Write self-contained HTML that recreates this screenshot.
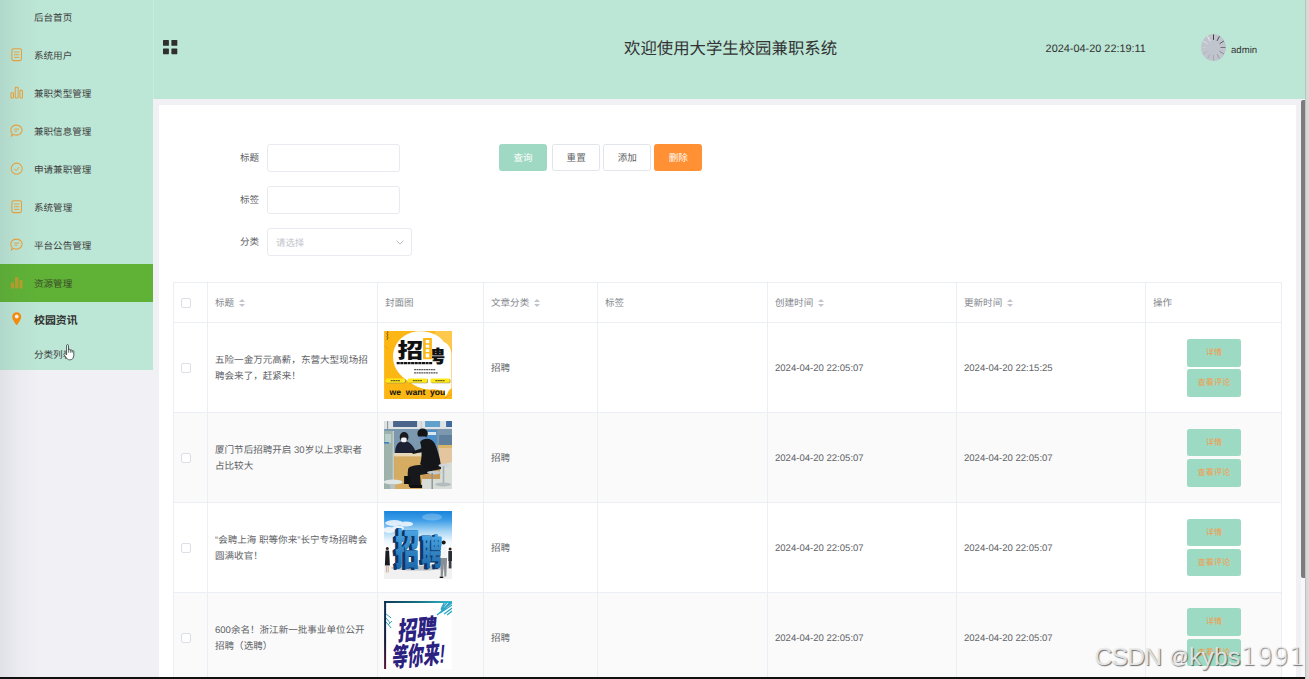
<!DOCTYPE html>
<html lang="zh-CN">
<head>
<meta charset="utf-8">
<title>大学生校园兼职系统</title>
<style>
*{box-sizing:border-box;margin:0;padding:0}
html,body{width:1309px;height:679px;overflow:hidden}
body{position:relative;background:#f0f0f5;font-family:"Liberation Sans","Noto Sans CJK SC",sans-serif;font-size:9.56px;color:#636569;-webkit-text-size-adjust:none;text-rendering:geometricPrecision}
.abs{position:absolute}
/* sidebar */
#side{position:absolute;left:0;top:0;width:153px;height:370px;background:#bce6d6}
#sideshade{position:absolute;left:0;top:0;width:40px;height:677px;background:linear-gradient(90deg,rgba(60,70,80,.085),rgba(60,70,80,.03) 45%,rgba(60,70,80,0));pointer-events:none}
.mi{position:absolute;left:0;width:153px;height:38px;line-height:41px;color:#3d3d3d;font-size:9.56px;padding-left:34px;white-space:nowrap}
.mi svg{position:absolute;left:10.3px;top:12.2px;width:13.4px;height:13.4px}
.mi.act{background:#5fb236}
.mi.sub{font-weight:bold;font-size:10.9px;color:#303030;line-height:42.6px}
.mi.act{color:#3b4a2c}
/* header */
#head{position:absolute;left:153px;top:0;width:1152px;height:99px;background:#bce6d6}
#seam{position:absolute;left:153px;top:0;width:1px;height:99px;background:#c9ebde}
#title{position:absolute;left:624px;top:37.3px;width:213px;height:24px;line-height:24px;font-size:16.4px;color:#333;white-space:nowrap;text-align:center}
#clock{position:absolute;left:1045.6px;top:42px;font-size:10.9px;line-height:14px;color:#333;white-space:nowrap}
#user{position:absolute;left:1231px;top:45.4px;font-size:9.6px;line-height:12px;color:#333}
/* scrollbar */
#sbtrack{position:absolute;left:1305px;top:0;width:4px;height:679px;background:linear-gradient(90deg,#b4b4b4 0,#d6d6d6 1.3px,#dbdbdb 100%)}
#sbbg{position:absolute;left:1301px;top:99px;width:4px;height:578px;background:#f7f7f9}
#sbthumb{position:absolute;left:1301px;top:100px;width:4px;height:478px;background:#7d7d7d;border-radius:2px 0 0 2px}
#bottombar{position:absolute;left:0;top:677px;width:1305px;height:2px;background:#111}
/* card */
#card{position:absolute;left:159px;top:105px;width:1136.5px;height:572px;background:#fff}
.lbl{position:absolute;width:60px;text-align:right;line-height:30px;height:27.5px;color:#606266;font-size:9.56px}
.inp{position:absolute;height:27.5px;border:1px solid #e8eaef;border-radius:3px;background:#fff}
.btn{position:absolute;top:144.2px;width:47.5px;height:27.2px;line-height:28px;text-align:center;border-radius:2.5px;font-size:9.56px;border:1px solid #e1e4ea;background:#fff;color:#606266}
.ph{position:absolute;left:8px;top:0;line-height:28px;color:#c0c4cc;font-size:9.4px}
.arr{position:absolute;right:7px;top:11px}
.th{position:absolute;left:6.3px;top:8.3px;width:68.2px;height:68px}
/* table */
#tbl{position:absolute;left:173px;top:282px;width:1109px;height:395px;border-left:1px solid #ebeef5;border-top:1px solid #ebeef5;overflow:hidden}
.row{position:absolute;left:0;width:1108px;border-bottom:1px solid #ebeef5;background:#fff}
.row.alt{background:#fafafa}
.c{position:absolute;top:0;height:100%;border-right:1px solid #ebeef5;padding-left:7px;display:flex;align-items:center;line-height:15.9px;color:#606266;padding-top:3.8px}
.hd .c{color:#85888e;padding-top:2.6px}
.cb{position:absolute;left:7.4px;top:50%;margin-top:-5px;width:10px;height:10px;border:1px solid #dcdfe6;border-radius:2px;background:#fff}
.ab{position:absolute;left:40.8px;width:54.4px;height:27.5px;line-height:28.5px;text-align:center;background:#9ddac3;color:#f39b4a;border-radius:2.5px;font-size:8.2px}
.sort{display:inline-block;position:relative;width:8px;height:12px;margin-left:4px}
.sort:before,.sort:after{content:"";position:absolute;left:1px;border:3px solid transparent}
.sort:before{top:-2px;border-bottom-color:#c0c4cc}
.sort:after{top:6px;border-top-color:#c0c4cc}
#wm{position:absolute;left:1094.6px;top:641px;font-size:24.6px;line-height:32px;color:rgba(235,235,235,.92);text-shadow:1px 1px 1px rgba(0,0,0,.55);white-space:nowrap;font-family:"Liberation Sans",sans-serif}
</style>
</head>
<body>
<div id="side">
<div class="mi" style="top:-2px">后台首页</div>
<div class="mi" style="top:36px"><svg viewBox="0 0 14 14" fill="none" stroke="#eda23c" stroke-width="1.1"><rect x="2" y="0.8" width="10" height="12.4" rx="1.6"/><path d="M4.3 4.2h5.4M4.3 7h5.4M4.3 9.8h5.4" stroke-width="1"/></svg>系统用户</div>
<div class="mi" style="top:74px"><svg viewBox="0 0 14 14" fill="none" stroke="#eda23c" stroke-width="1.1"><rect x="1" y="7" width="2.6" height="5.6" rx=".8"/><rect x="5.5" y="1.4" width="3" height="11.2" rx=".8"/><rect x="10.4" y="4.6" width="2.6" height="8" rx=".8"/></svg>兼职类型管理</div>
<div class="mi" style="top:112px"><svg viewBox="0 0 14 14" fill="none" stroke="#eda23c" stroke-width="1.1"><path d="M7 1.2a5.6 5.2 0 1 1-3 9.6L1.6 12.6l.6-2.9A5.6 5.2 0 0 1 7 1.2z"/><path d="M4.6 5.4h5M4.6 7.6h3" stroke-width="1"/></svg>兼职信息管理</div>
<div class="mi" style="top:150px"><svg viewBox="0 0 14 14" fill="none" stroke="#eda23c" stroke-width="1.1"><circle cx="7" cy="7" r="5.8"/><path d="M4.4 7.2l1.9 1.9 3.4-3.8" stroke-width="1"/></svg>申请兼职管理</div>
<div class="mi" style="top:188px"><svg viewBox="0 0 14 14" fill="none" stroke="#eda23c" stroke-width="1.1"><rect x="2" y="0.8" width="10" height="12.4" rx="1.6"/><path d="M4.3 4.2h5.4M4.3 7h5.4M4.3 9.8h5.4" stroke-width="1"/></svg>系统管理</div>
<div class="mi" style="top:226px"><svg viewBox="0 0 14 14" fill="none" stroke="#eda23c" stroke-width="1.1"><path d="M7 1.2a5.6 5.2 0 1 1-3 9.6L1.6 12.6l.6-2.9A5.6 5.2 0 0 1 7 1.2z"/><path d="M4.6 5.4h5M4.6 7.6h3" stroke-width="1"/></svg>平台公告管理</div>
<div class="mi act" style="top:264px"><svg viewBox="0 0 14 14" fill="#b59f2c" stroke="none"><rect x="0.8" y="6.6" width="3.4" height="6.4" rx=".8"/><rect x="5.2" y="1" width="3.6" height="12" rx=".8"/><rect x="9.8" y="4.2" width="3.4" height="8.8" rx=".8"/></svg>资源管理</div>
<div class="mi sub" style="top:300px"><svg viewBox="0 0 14 14" fill="#fb8c0a" stroke="none"><path d="M7 0.2a4.700 4.700 0 0 0-4.700 4.700c0 3.200 4.700 9 4.700 9s4.700-5.800 4.700-9A4.700 4.700 0 0 0 7 .2z"/><circle cx="7" cy="4.700" r="2" fill="#fff6ea"/></svg>校园资讯</div>
<div class="mi" style="top:334.7px">分类列表</div>
</div>
<div id="sideshade"></div>
<svg class="abs" style="left:62.8px;top:344.3px" width="13" height="17" viewBox="0 0 13 17"><path d="M3.6 1.6a.95.95 0 0 1 1.9 0v4.5a.9.9 0 0 1 1.8.1v.5a.9.9 0 0 1 1.8.2v.5a.85.85 0 0 1 1.7.3v3.5c0 2.6-1.4 4.6-3.6 4.6H6.4c-1.2 0-2-.5-2.8-1.6L1.1 10.8c-.6-.9.5-1.8 1.3-1.1l1.2 1.2z" fill="#fff" stroke="#3c4a48" stroke-width=".9" stroke-linejoin="round"/><path d="M5.500 6.200v2.500M7.300 6.600v2.200M9.100 7v1.900" stroke="#3c4a48" stroke-width=".7" fill="none"/></svg>
<div id="head"></div>
<div id="seam"></div>
<svg class="abs" style="left:163px;top:40px" width="15" height="15" viewBox="0 0 15 15" fill="#2f2f2f"><rect x="0" y="0" width="5.9" height="5.8" rx=".6"/><rect x="8.4" y="0" width="5.9" height="5.8" rx=".6"/><rect x="0" y="8.5" width="5.9" height="5.7" rx=".6"/><rect x="8.4" y="8.5" width="5.9" height="5.7" rx=".6"/></svg>
<div id="title">欢迎使用大学生校园兼职系统</div>
<div id="clock">2024-04-20 22:19:11</div>
<svg id="avatar" class="abs" style="left:1201px;top:34px" width="25" height="27" viewBox="0 0 25 27"><ellipse cx="12.5" cy="13.5" rx="12.5" ry="13.5" fill="#c0c4cc"/><g stroke-width="1" stroke-linecap="round"><line x1="12.50" y1="5.50" x2="12.50" y2="0.90" stroke="#3a3d44"/><line x1="16.20" y1="6.57" x2="18.30" y2="2.59" stroke="#4a4d55"/><line x1="18.91" y1="9.50" x2="22.55" y2="7.20" stroke="#5a5d65"/><line x1="19.90" y1="13.50" x2="24.10" y2="13.50" stroke="#70737b"/><line x1="18.91" y1="17.50" x2="22.55" y2="19.80" stroke="#868991"/><line x1="16.20" y1="20.43" x2="18.30" y2="24.41" stroke="#9a9da5"/><line x1="12.50" y1="21.50" x2="12.50" y2="26.10" stroke="#a6a9b1"/><line x1="8.80" y1="20.43" x2="6.70" y2="24.41" stroke="#adb0b8"/><line x1="6.09" y1="17.50" x2="2.45" y2="19.80" stroke="#b2b5bd"/><line x1="5.10" y1="13.50" x2="0.90" y2="13.50" stroke="#c8ccd4"/><line x1="6.09" y1="9.50" x2="2.45" y2="7.20" stroke="#dfe2e8"/><line x1="8.80" y1="6.57" x2="6.70" y2="2.59" stroke="#eceef2"/></g></svg>
<div id="user">admin</div>
<div id="sbbg"></div><div id="sbtrack"></div><div id="sbthumb"></div><div id="bottombar"></div>
<div id="card"></div>
<div class="lbl" style="left:199px;top:144px">标题</div><div class="inp" style="left:267px;top:144px;width:133px"></div>
<div class="lbl" style="left:199px;top:186px">标签</div><div class="inp" style="left:267px;top:186px;width:133px"></div>
<div class="lbl" style="left:199px;top:228.4px">分类</div><div class="inp" style="left:267px;top:228.4px;width:145px"><span class="ph">请选择</span><svg class="arr" viewBox="0 0 8 5" width="8" height="5"><path d="M.5.6L4 4.100 7.500.6" fill="none" stroke="#b3b7bf" stroke-width="1"/></svg></div>
<div class="btn" style="left:499.2px;width:47.8px;background:#9fd9c3;border-color:#9fd9c3;color:#fff">查询</div>
<div class="btn" style="left:552.4px">重置</div>
<div class="btn" style="left:603.3px;width:47.8px">添加</div>
<div class="btn" style="left:654.3px;width:47.8px;background:#ff9033;border-color:#ff9033;color:#fff">删除</div>
<div id="tbl">
<div class="row hd" style="top:0px;height:40px"><div class="c" style="left:0px;width:34px"><span class="cb"></span></div><div class="c" style="left:34px;width:170px">标题<i class="sort"></i></div><div class="c" style="left:204px;width:106px">封面图</div><div class="c" style="left:310px;width:114px">文章分类<i class="sort"></i></div><div class="c" style="left:424px;width:170px">标签</div><div class="c" style="left:594px;width:189px">创建时间<i class="sort"></i></div><div class="c" style="left:783px;width:189px">更新时间<i class="sort"></i></div><div class="c" style="left:972px;width:136px">操作</div></div>
<div class="row " style="top:40px;height:90px"><div class="c" style="left:0px;width:34px"><span class="cb"></span></div><div class="c" style="left:34px;width:170px"><div>五险一金万元高薪，东营大型现场招<br>聘会来了，赶紧来！</div></div><div class="c" style="left:204px;width:106px"><svg class="th" viewBox="0 0 68 68" width="68" height="68"><defs><clipPath id="rh"><rect x="48" y="10" width="20" height="26"/></clipPath></defs><rect width="68" height="68" fill="#fdb714"/><circle cx="61" cy="7" r="11.5" fill="#fdc84c"/><path d="M36 .2c11 0 19 4 24 11 4 1 7.400 6 7.400 12v34c-1 1-3 2-4 5-.4 1.600-1.400 2.600-2.400 3.200.6-3-1-6-5-6.400-8-.6-17 .6-26-5C18 47 9 39 9 26 9 11 21 .2 36 .2z" fill="#fff"/><path d="M60 11c4 1 7.400 6 7.400 12V0H49c5 2 9 6 11 11z" fill="#fdc84c" opacity=".55"/><path d="M3.400 .4c1.800 1-1.800 1.800 0 2.800s-1.800 1.800 0 2.800-1.800 1.800 0 2.800" stroke="#222" stroke-width=".7" fill="none"/><path d="M.2 15.300l4 2.300" stroke="#f39a1e" stroke-width=".8"/><path d="M60 67.400l8-4.400" stroke="#f39a1e" stroke-width=".8"/>
<text x="13.400" y="27.400" font-family="'Liberation Sans','Noto Sans CJK SC',sans-serif" font-weight="900" font-size="21" fill="#111" textLength="25.600" lengthAdjust="spacingAndGlyphs">招</text>
<rect x="39" y="7" width="8.800" height="21.200" fill="#fdb714"/><rect x="41.600" y="9" width="3.600" height="17.400" fill="#fff"/><path d="M41 13h5M41 17.400h5M41 21.800h5" stroke="#fdb714" stroke-width="1.500"/>
<text x="37.600" y="32" font-family="'Liberation Sans','Noto Sans CJK SC',sans-serif" font-weight="900" font-size="18" fill="#111" textLength="23.200" lengthAdjust="spacingAndGlyphs" clip-path="url(#rh)">聘</text>
<path d="M12.600 32.200h35.800" stroke="#151515" stroke-width="2.200" stroke-dasharray="3.100 .5"/><path d="M30 38.600h21.600M30 41.900h24" stroke="#555" stroke-width="1.300" stroke-dasharray="1.900 .5"/>
<g fill="#8d8466"><rect x="2.200" y="48.100" width="19.400" height="4.200" rx="1.200"/><rect x="24.300" y="48.100" width="19.600" height="4.200" rx="1.200"/><rect x="47" y="48.100" width="19.300" height="4.200" rx="1.200"/></g><g fill="#ffe81a"><rect x="1.600" y="47.500" width="19.400" height="4.200" rx="1.200"/><rect x="23.700" y="47.500" width="19.600" height="4.200" rx="1.200"/><rect x="46.400" y="47.500" width="19.300" height="4.200" rx="1.200"/></g>
<path d="M6.600 49.600h9.600M28.700 49.600h9.600M51.300 49.600h9.600" stroke="#6b6420" stroke-width="1.200" stroke-dasharray="2 .4"/>
<text x="5.500" y="63.800" font-family="'Liberation Sans',sans-serif" font-weight="bold" font-size="8.600" fill="#111" word-spacing="2.300">we want you</text></svg></div><div class="c" style="left:310px;width:114px">招聘</div><div class="c" style="left:424px;width:170px"></div><div class="c" style="left:594px;width:189px">2024-04-20 22:05:07</div><div class="c" style="left:783px;width:189px">2024-04-20 22:15:25</div><div class="c" style="left:972px;width:136px"><div class="ab" style="top:16px">详情</div><div class="ab" style="top:46.3px">查看评论</div></div></div>
<div class="row alt" style="top:130px;height:90px"><div class="c" style="left:0px;width:34px"><span class="cb"></span></div><div class="c" style="left:34px;width:170px"><div>厦门节后招聘开启 30岁以上求职者<br>占比较大</div></div><div class="c" style="left:204px;width:106px"><svg class="th" viewBox="0 0 68 68" width="68" height="68"><rect width="68" height="68" fill="#7b98ae"/><rect width="68" height="8" fill="#dfe3e6"/><rect x="9" y="0" width="24" height="6" fill="#4a648c"/><rect x="41" y="0" width="15" height="6" fill="#5fa0cc"/><rect x="62" y="0" width="6" height="6" fill="#3f6aa0"/><rect x="3" y="0" width="1" height="8" fill="#8a8f95"/><rect x="36.5" y="0" width="1.2" height="8" fill="#c8ccd0"/><rect x="55" y="14" width="13" height="11" fill="#5f7f9c"/><rect x="42" y="9" width="11" height="14" fill="#4f8fc8"/><rect x="43" y="11" width="9" height="3" fill="#d8e6f0"/>
<rect x="0" y="10" width="9.5" height="58" fill="#9fb3ac"/><rect x="1" y="13" width="6" height="9" fill="#b9d0cc"/><rect x="0" y="21" width="5" height="1.6" fill="#3f7fbf"/><rect x="8.6" y="10" width="1.2" height="58" fill="#c9d2d0"/>
<rect x="30" y="40" width="38" height="28" fill="#d9ddd8"/><path d="M54 25h14v16l-12 3z" fill="#e3c5a0"/><rect x="54" y="24" width="14" height="3" fill="#d8b56a"/><rect x="10" y="33" width="28" height="35" fill="#d6ab62"/><rect x="10" y="32" width="30" height="3.4" fill="#e8d8b8"/><rect x="38" y="44" width="18" height="14" fill="#c99a58"/>
<path d="M11 32c0-8 3-12 9-12s10 6 12 12z" fill="#1c2233"/><ellipse cx="20" cy="16" rx="4.4" ry="5" fill="#1b1a1e"/><rect x="17" y="16.4" width="5.6" height="4.8" rx="1.6" fill="#f4f4f6"/>
<ellipse cx="38.5" cy="12.5" rx="5.2" ry="5" fill="#141417"/><path d="M34.6 15.4h7v5.4h-5z" fill="#6b8fc0"/><path d="M36 21c4-5 12-4 15 2 3 7 6 18 6 25l-14 3-7-8c2-6 2-16 0-22z" fill="#15161a"/><path d="M42 30l-13 3-2-2 14-5z" fill="#15161a"/><path d="M37 44c-6 0-12 1-13 4-1 6 0 13 1 18h12l-1-12 12-2z" fill="#17181c"/><path d="M20 55h6v8h-6z" fill="#111"/><path d="M26 64h12v3H26z" fill="#101012"/>
<ellipse cx="9" cy="61" rx="9.5" ry="2.6" fill="#dfe7e6"/><rect x="6" y="63" width="5" height="5" fill="#b9c4c2"/><ellipse cx="50" cy="51.6" rx="7" ry="1.8" fill="#c3cacd"/><rect x="47.4" y="52" width="1.4" height="16" fill="#8c9599"/><ellipse cx="60" cy="44.6" rx="5.6" ry="1.8" fill="#cfd5d8"/><rect x="58.6" y="45" width="1.6" height="17" fill="#a8b0b4"/><ellipse cx="59" cy="63.4" rx="8" ry="2" fill="#b4bcc0"/></svg></div><div class="c" style="left:310px;width:114px">招聘</div><div class="c" style="left:424px;width:170px"></div><div class="c" style="left:594px;width:189px">2024-04-20 22:05:07</div><div class="c" style="left:783px;width:189px">2024-04-20 22:05:07</div><div class="c" style="left:972px;width:136px"><div class="ab" style="top:15.8px">详情</div><div class="ab" style="top:46.1px">查看评论</div></div></div>
<div class="row " style="top:220px;height:90px"><div class="c" style="left:0px;width:34px"><span class="cb"></span></div><div class="c" style="left:34px;width:170px"><div>“会聘上海 职等你来”长宁专场招聘会<br>圆满收官！</div></div><div class="c" style="left:204px;width:106px"><svg class="th" viewBox="0 0 68 68" width="68" height="68"><defs><linearGradient id="sky" x1="0" y1="0" x2="0" y2="1"><stop offset="0" stop-color="#1a84dc"/><stop offset=".14" stop-color="#3f9fe8"/><stop offset=".3" stop-color="#a9d6f5"/><stop offset=".44" stop-color="#edf6fd"/><stop offset=".55" stop-color="#fff"/><stop offset="1" stop-color="#fff"/></linearGradient><linearGradient id="lf" x1="0" y1="0" x2="0" y2="1"><stop offset="0" stop-color="#4ea9e8"/><stop offset="1" stop-color="#175f9f"/></linearGradient></defs><rect width="68" height="68" fill="url(#sky)"/><rect y="55" width="68" height="13" fill="#f1f1f2"/><g fill="#fff" opacity=".8"><ellipse cx="10" cy="12" rx="9" ry="3"/><ellipse cx="22" cy="13" rx="7" ry="2.6"/><ellipse cx="5" cy="19" rx="6" ry="3"/><ellipse cx="14" cy="17" rx="6" ry="2.4"/><ellipse cx="48" cy="6" rx="10" ry="3.6" opacity=".3"/></g>
<ellipse cx="34" cy="57" rx="27" ry="2.6" fill="#8f99a4" opacity=".55"/>
<g font-family="'Liberation Sans','Noto Sans CJK SC',sans-serif" font-weight="900"><text x="8.00" y="54.60" font-size="43" textLength="24" lengthAdjust="spacingAndGlyphs" fill="#0a3768">招</text><text x="8.80" y="54.35" font-size="43" textLength="24" lengthAdjust="spacingAndGlyphs" fill="#0a3768">招</text><text x="9.60" y="54.10" font-size="43" textLength="24" lengthAdjust="spacingAndGlyphs" fill="#0a3768">招</text><text x="10.40" y="53.85" font-size="43" textLength="24" lengthAdjust="spacingAndGlyphs" fill="#0a3768">招</text><text x="11.2" y="53.6" font-size="43" textLength="24" lengthAdjust="spacingAndGlyphs" fill="url(#lf)">招</text><text x="34.20" y="55.00" font-size="36" textLength="21.4" lengthAdjust="spacingAndGlyphs" fill="#0a3768">聘</text><text x="35.00" y="54.75" font-size="36" textLength="21.4" lengthAdjust="spacingAndGlyphs" fill="#0a3768">聘</text><text x="35.80" y="54.50" font-size="36" textLength="21.4" lengthAdjust="spacingAndGlyphs" fill="#0a3768">聘</text><text x="36.60" y="54.25" font-size="36" textLength="21.4" lengthAdjust="spacingAndGlyphs" fill="#0a3768">聘</text><text x="37.4" y="54" font-size="36" textLength="21.4" lengthAdjust="spacingAndGlyphs" fill="url(#lf)">聘</text></g>
<g><circle cx="3.2" cy="37.6" r="1.5" fill="#2a1c16"/><path d="M1.400 39.600h3.600l.8 15H.8z" fill="#1b1c22"/><path d="M1.800 54.600h.9v7h-.9zM3.600 54.600h.9v7h-.9z" fill="#c9a48c"/></g>
<g><circle cx="59.600" cy="31.600" r="2" fill="#1c1512"/><path d="M57.200 34.400h5.200l.8 12.600h-6.800z" fill="#f4f5f7"/><path d="M56.600 47h6.400l-.8 18.600h-1.900l-.5-12-1.200 12h-2z" fill="#8a8e94"/><path d="M55.600 65.600h3.600V67h-3.600z" fill="#111"/></g>
<g><circle cx="66" cy="38" r="1.500" fill="#2a1c16"/><path d="M64.200 40h3.800v10h-3.800z" fill="#2a2d36"/><path d="M64.600 50h2.800v7.400h-2.800z" fill="#3a3d44"/></g></svg></div><div class="c" style="left:310px;width:114px">招聘</div><div class="c" style="left:424px;width:170px"></div><div class="c" style="left:594px;width:189px">2024-04-20 22:05:07</div><div class="c" style="left:783px;width:189px">2024-04-20 22:05:07</div><div class="c" style="left:972px;width:136px"><div class="ab" style="top:15.6px">详情</div><div class="ab" style="top:45.9px">查看评论</div></div></div>
<div class="row alt" style="top:310px;height:90px"><div class="c" style="left:0px;width:34px"><span class="cb"></span></div><div class="c" style="left:34px;width:170px"><div>600余名！浙江新一批事业单位公开<br>招聘（选聘）</div></div><div class="c" style="left:204px;width:106px"><svg class="th" viewBox="0 0 68 68" width="68" height="68"><defs><linearGradient id="tb" x1="0" y1="0" x2="1" y2="0"><stop offset="0" stop-color="#0d3a58"/><stop offset=".5" stop-color="#17707f"/><stop offset="1" stop-color="#35bdd0"/></linearGradient><linearGradient id="lb" x1="0" y1="0" x2="0" y2="1"><stop offset="0" stop-color="#0b2f55"/><stop offset=".6" stop-color="#121a3a"/><stop offset="1" stop-color="#5a1430"/></linearGradient></defs><rect width="68" height="68" fill="#fff"/><rect width="68" height="2" fill="url(#tb)"/><rect width="2" height="68" fill="url(#lb)"/>
<g stroke="#2ca6c4" stroke-width="1" fill="none"><path d="M68 1L53 14M68 4L56 12M66 1l-9 10M68 7l-8 6M63 1l-6 8M68 10l-5 4M60 2l-3 6M68 2L58 9M65 3l-8 7" stroke-width="1.3"/><path d="M2 13l5 4M2 17l4 5M2 21l5 6M8 20l-4 4" stroke="#2f9fb8"/></g>
<g font-family="'Liberation Sans','Noto Sans CJK SC',sans-serif" font-weight="900" fill="#2b2180"><text transform="translate(13.5 39.5) skewX(-10) rotate(-5)" font-size="26" textLength="38" lengthAdjust="spacingAndGlyphs">招聘</text><text transform="translate(7.5 66) skewX(-10) rotate(-5)" font-size="26" textLength="52" lengthAdjust="spacingAndGlyphs">等你来!</text></g></svg></div><div class="c" style="left:310px;width:114px">招聘</div><div class="c" style="left:424px;width:170px"></div><div class="c" style="left:594px;width:189px">2024-04-20 22:05:07</div><div class="c" style="left:783px;width:189px">2024-04-20 22:05:07</div><div class="c" style="left:972px;width:136px"><div class="ab" style="top:15.4px">详情</div><div class="ab" style="top:45.7px">查看评论</div></div></div>
</div>
<div id="wm"><span style="letter-spacing:-.75px">CSDN</span><span style="font-size:19px;position:relative;top:-2.4px;margin-left:2.6px"> @</span><span style="letter-spacing:.2px;margin-left:.6px">kybs</span><span style="font-family:'DejaVu Sans',sans-serif;font-weight:200;font-size:25px;letter-spacing:.1px;margin-left:.3px">1991</span></div>
</body>
</html>
